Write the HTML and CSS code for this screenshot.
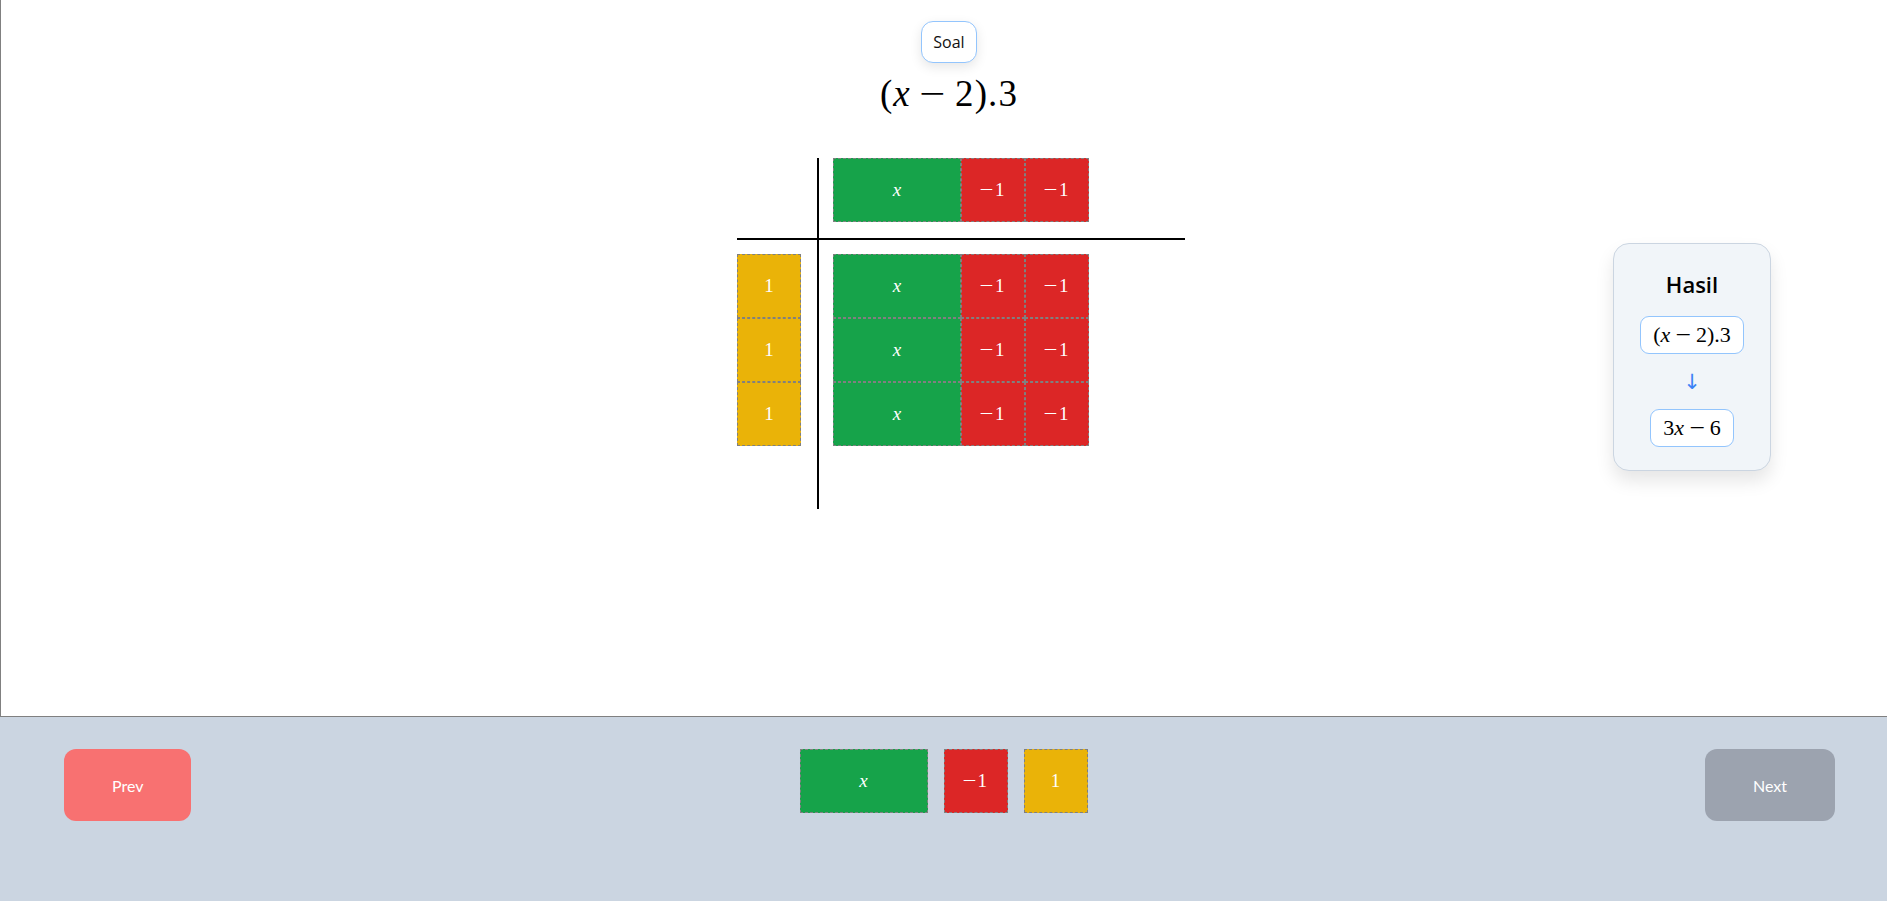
FILE: index.html
```html
<!DOCTYPE html>
<html lang="id">
<head>
<meta charset="utf-8">
<title>Aljabar Tiles</title>
<link rel="stylesheet" href="styles.css">
</head>
<body>
<main class="stage">
  <button class="soal-btn" type="button">Soal</button>
  <div class="math title-math">(<i>x</i><span class="op">−</span>2).3</div>

  <div class="board">
    <div class="cell corner"></div>
    <div class="vline"></div>
    <div class="cell top">
      <div class="tile-row">
        <div class="tile green wide"><i>x</i></div>
        <div class="tile red"><span class="neg">−</span>1</div>
        <div class="tile red"><span class="neg">−</span>1</div>
      </div>
    </div>
    <div class="hline"></div>
    <div class="cell left">
      <div class="tile-col">
        <div class="tile yellow">1</div>
        <div class="tile yellow">1</div>
        <div class="tile yellow">1</div>
      </div>
    </div>
    <div class="cell product">
      <div class="tile-row">
        <div class="tile green wide"><i>x</i></div>
        <div class="tile red"><span class="neg">−</span>1</div>
        <div class="tile red"><span class="neg">−</span>1</div>
      </div>
      <div class="tile-row">
        <div class="tile green wide"><i>x</i></div>
        <div class="tile red"><span class="neg">−</span>1</div>
        <div class="tile red"><span class="neg">−</span>1</div>
      </div>
      <div class="tile-row">
        <div class="tile green wide"><i>x</i></div>
        <div class="tile red"><span class="neg">−</span>1</div>
        <div class="tile red"><span class="neg">−</span>1</div>
      </div>
    </div>
  </div>

  <aside class="result">
    <h2 class="result-title">Hasil</h2>
    <div class="expr-box math">(<i>x</i><span class="op">−</span>2).3</div>
    <div class="arrow">↓</div>
    <div class="expr-box math">3<i>x</i><span class="op">−</span>6</div>
  </aside>
</main>

<footer class="toolbar">
  <button class="nav-btn prev" type="button">Prev</button>
  <div class="palette">
    <div class="tile green wide"><i>x</i></div>
    <div class="tile red"><span class="neg">−</span>1</div>
    <div class="tile yellow">1</div>
  </div>
  <button class="nav-btn next" type="button">Next</button>
</footer>
</body>
</html>
```

FILE: styles.css
```css
* {
  box-sizing: border-box;
}

html, body {
  margin: 0;
  padding: 0;
}

body {
  width: 1887px;
  height: 901px;
  overflow: hidden;
  background: #cbd5e1;
  font-family: "Open Sans", "Noto Sans", sans-serif;
  color: #111;
}

.stage {
  position: relative;
  height: 717px;
  background: #ffffff;
  border-left: 1px solid #808080;
  border-bottom: 1px solid #808080;
  display: flex;
  flex-direction: column;
  align-items: center;
  padding: 21px 0 0 10px;
}

.soal-btn {
  font-family: "Open Sans", "Noto Sans", sans-serif;
  font-size: 16px;
  line-height: 20px;
  color: #111;
  background: #ffffff;
  border: 1px solid #93c5fd;
  border-radius: 12px;
  padding: 10px 11px;
  height: 42px;
  box-shadow: 0 4px 12px rgba(0, 0, 0, 0.1);
}

.math {
  font-family: "Liberation Serif", "DejaVu Serif", serif;
  white-space: nowrap;
}

.math i {
  font-style: italic;
}

.math .op {
  display: inline-block;
  margin: 0 0.3em;
  transform: scaleX(1.25);
}

.title-math {
  font-size: 37px;
  line-height: 40px;
  margin-top: 11px;
  letter-spacing: 0.03em;
  color: #000;
}

/* board */
.board {
  margin-top: 44px;
  margin-left: 24px;
  display: grid;
  grid-template-columns: 80px 2px 366px;
  grid-template-rows: 80px 2px 269px;
}

.vline {
  grid-column: 2;
  grid-row: 1 / 4;
  background: #000;
}

.hline {
  grid-column: 1 / 4;
  grid-row: 2;
  background: #000;
}

.corner {
  grid-column: 1;
  grid-row: 1;
}

.top {
  grid-column: 3;
  grid-row: 1;
  padding-left: 14px;
}

.left {
  grid-column: 1;
  grid-row: 3;
  padding-top: 14px;
}

.product {
  grid-column: 3;
  grid-row: 3;
  padding: 14px 0 0 14px;
  display: flex;
  flex-direction: column;
}

.tile-row {
  display: flex;
}

.tile-col {
  display: flex;
  flex-direction: column;
}

.tile {
  width: 64px;
  height: 64px;
  border: 1px dashed #808080;
  display: flex;
  align-items: center;
  justify-content: center;
  color: #ffffff;
  font-family: "Liberation Serif", "DejaVu Serif", serif;
  font-size: 19px;
  flex: none;
}

.tile i {
  font-style: italic;
}

.tile .neg {
  display: inline-block;
  transform: scaleX(1.3);
  margin-right: 3px;
}

.tile.wide {
  width: 128px;
}

.green {
  background: #16a34a;
}

.red {
  background: #dc2626;
}

.yellow {
  background: #eab308;
}

/* result panel */
.result {
  position: absolute;
  top: 243px;
  right: 116px;
  width: 158px;
  padding: 24px 24px 23px;
  background: #f1f5f9;
  border: 1px solid #cbd5e1;
  border-radius: 16px;
  box-shadow: 0 10px 18px rgba(0, 0, 0, 0.1);
  display: flex;
  flex-direction: column;
  align-items: center;
  gap: 16px;
}

.result-title {
  margin: 0;
  font-family: "Open Sans", "Noto Sans", sans-serif;
  font-size: 22px;
  font-weight: 600;
  line-height: 32px;
  color: #000;
}

.expr-box {
  background: #ffffff;
  border: 1px solid #93c5fd;
  border-radius: 9px;
  padding: 0 12px;
  height: 38px;
  display: flex;
  align-items: center;
  font-size: 22px;
  color: #000;
}

.arrow {
  color: #3b82f6;
  font-family: "DejaVu Sans", sans-serif;
  font-size: 21px;
  line-height: 23px;
  margin-top: 1px;
  margin-bottom: -1px;
}

/* toolbar */
.toolbar {
  height: 184px;
  display: grid;
  grid-template-columns: 1fr auto 1fr;
  align-items: start;
  padding-top: 32px;
}

.nav-btn {
  height: 72px;
  border: none;
  border-radius: 12px;
  color: #ffffff;
  font-family: "Lato", "Open Sans", sans-serif;
  font-size: 16px;
  padding: 0 48px;
}

.prev {
  justify-self: start;
  margin-left: 64px;
  background: #f87171;
}

.next {
  justify-self: end;
  margin-right: 52px;
  background: #9ca3af;
}

.palette {
  display: flex;
  gap: 16px;
}
```
